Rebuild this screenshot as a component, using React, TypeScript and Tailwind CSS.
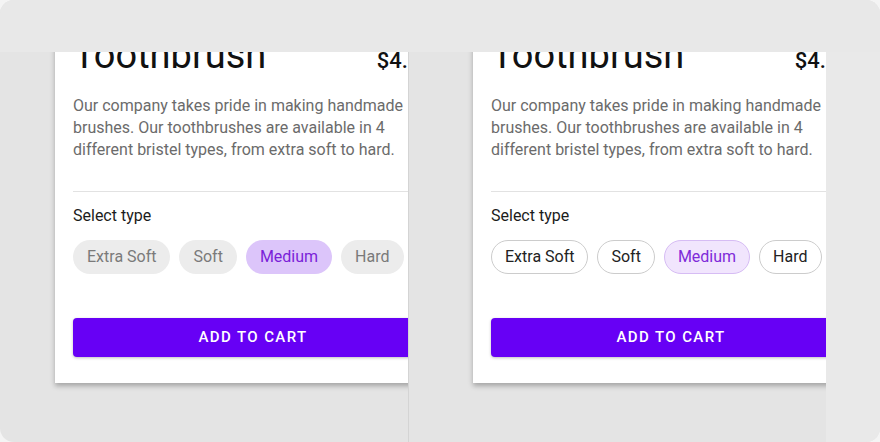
import React from 'react';

const TYPES = ['Extra Soft', 'Soft', 'Medium', 'Hard'];

type Variant = 'filled' | 'outlined';

function Chip({ label, selected, variant }: { label: string; selected: boolean; variant: Variant }) {
  let cls = '';
  if (variant === 'filled') {
    cls = selected
      ? 'bg-[#dcc5fa] text-[#7b1fd8] border border-transparent'
      : 'bg-[#ececec] text-[#7a7a7a] border border-transparent';
  } else {
    cls = selected
      ? 'bg-[#f1e5fd] text-[#7f2bd9] border border-[#d6bcf4]'
      : 'bg-white text-[#222222] border border-[#cccccc]';
  }
  return (
    <span className={`h-[34px] px-[13px] rounded-full flex items-center text-[16px] leading-none ${cls}`}>
      {label}
    </span>
  );
}

function ProductCard({ variant }: { variant: Variant }) {
  return (
    <div className="w-[396px] -mt-[40px] bg-white shadow-[0_3px_5px_rgba(0,0,0,0.28)] px-[18px] pt-[24px] pb-[26px] shrink-0">
      {/* Title row */}
      <div className="flex items-baseline justify-between">
        <h2 className="text-[38px] leading-[38px] font-normal text-[#111111]">Toothbrush</h2>
        <span className="text-[22px] leading-[38px] font-medium text-[#111111]">$4.50</span>
      </div>

      <p className="mt-[15px] text-[16px] leading-[22px] text-[#6b6b6b]">
        Our company takes pride in making handmade brushes. Our toothbrushes are available in 4 different bristel types, from extra soft to hard.
      </p>

      <div className="mt-[30px] h-px bg-[#e2e2e2]" />

      <div className="mt-[12px] text-[16px] leading-[24px] text-[#1c1c1c]">Select type</div>

      <div className="mt-[12px] flex gap-[9px]">
        {TYPES.map((t) => (
          <Chip key={t} label={t} selected={t === 'Medium'} variant={variant} />
        ))}
      </div>

      <button className="mt-[44px] w-full h-[39px] rounded-[4px] bg-[#6700f5] text-white text-[15px] font-medium tracking-[1.4px] shadow-[0_1px_3px_rgba(0,0,0,0.25)]">
        ADD TO CART
      </button>
    </div>
  );
}

export default function App() {
  return (
    <div className="w-[880px] h-[442px] bg-[#f4f4f4] font-['Roboto',sans-serif]">
      <div className="h-full rounded-[14px] overflow-hidden bg-[#e4e4e4] flex flex-col">
        {/* Top band */}
        <div className="h-[52px] shrink-0 bg-[#e8e8e8] relative z-10" />

        <div className="flex flex-1 min-h-0">
          {/* Filled chips */}
          <div className="w-[409px] shrink-0 overflow-hidden pl-[55px] border-r border-[#d4d4d4]">
            <ProductCard variant="filled" />
          </div>

          {/* Outlined chips */}
          <div className="w-[417px] shrink-0 overflow-hidden pl-[64px]">
            <ProductCard variant="outlined" />
          </div>

          <div className="flex-1 bg-[#e9e9e9]" />
        </div>
      </div>
    </div>
  );
}
